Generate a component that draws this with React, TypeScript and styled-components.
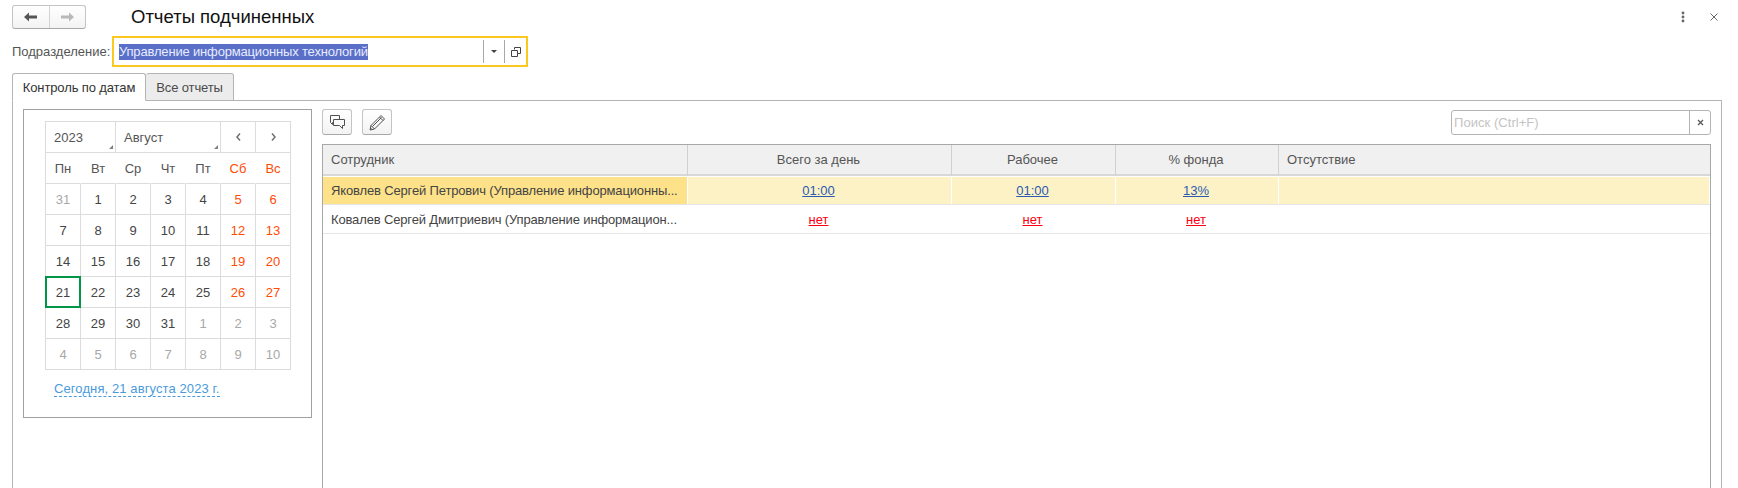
import styled, { createGlobalStyle } from "styled-components";

const GlobalStyle = createGlobalStyle`
    html, body {
        margin: 0;
        padding: 0;
        background: #ffffff;
        overflow: hidden;
    }
    body {
        font-family: "Liberation Sans", Arial, sans-serif;
        font-size: 13px;
        color: #4b4b4b;
    }
`;

const Page = styled.div`
    display: flex;
    flex-direction: column;
    width: 1738px;
    height: 488px;
    overflow: hidden;
`;

const TitleBar = styled.div`
    display: flex;
    align-items: center;
    height: 29px;
    padding: 5px 20px 0 12px;
    box-sizing: border-box;
`;

const NavGroup = styled.div`
    display: flex;
    width: 74px;
    height: 24px;
    box-sizing: border-box;
    border: 1px solid #c4c4c4;
    border-bottom-color: #a8a8a8;
    border-radius: 3px;
    background: linear-gradient(#ffffff, #f3f3f3);
`;

const NavButton = styled.div<{ $divided?: boolean }>`
    display: flex;
    align-items: center;
    justify-content: center;
    flex: 1;
    border-left: ${(p) => (p.$divided ? "1px solid #d4d4d4" : "none")};
`;

const Title = styled.div`
    margin-left: 45px;
    font-size: 18.5px;
    color: #111111;
`;

const TitleActions = styled.div`
    display: flex;
    align-items: center;
    gap: 25px;
    margin-left: auto;
`;

const FieldRow = styled.div`
    display: flex;
    align-items: center;
    height: 31px;
    margin-top: 7px;
    padding-left: 12px;
`;

const FieldLabel = styled.div`
    width: 100px;
    font-size: 13px;
    color: #555555;
`;

const FieldBox = styled.div`
    display: flex;
    align-items: center;
    width: 416px;
    height: 31px;
    box-sizing: border-box;
    border: 2px solid #fac81e;
    padding-left: 5px;
`;

const Selected = styled.span`
    background: #5a6fc8;
    color: #e8ecff;
    font-size: 13px;
    line-height: 16px;
    letter-spacing: -0.17px;
`;

const FieldButton = styled.div<{ $first?: boolean }>`
    display: flex;
    align-items: center;
    justify-content: center;
    width: ${(p) => (p.$first ? "20px" : "21px")};
    height: 23px;
    border-left: 1px solid #a8a8a8;
    margin-left: ${(p) => (p.$first ? "auto" : "0")};
`;

const TabStrip = styled.div`
    display: flex;
    height: 28px;
    margin-top: 6px;
    padding-left: 12px;
`;

const Tab = styled.div<{ $active?: boolean }>`
    display: flex;
    align-items: center;
    justify-content: center;
    width: ${(p) => (p.$active ? "134px" : "88px")};
    box-sizing: border-box;
    border: 1px solid #b4b4b4;
    border-left: ${(p) => (p.$active ? "1px solid #b4b4b4" : "none")};
    border-bottom: ${(p) => (p.$active ? "1px solid #ffffff" : "1px solid #b4b4b4")};
    border-radius: 3px 3px 0 0;
    background: ${(p) => (p.$active ? "#ffffff" : "#ececec")};
    color: ${(p) => (p.$active ? "#333333" : "#4b4b4b")};
    font-size: 13px;
    letter-spacing: -0.12px;
    position: relative;
    z-index: 1;
`;

const TabPanel = styled.div`
    display: flex;
    flex: 1;
    gap: 10px;
    width: 1710px;
    margin: -1px 0 0 12px;
    box-sizing: border-box;
    border: 1px solid #b4b4b4;
    border-bottom: none;
    padding: 8px 10px 0 10px;
`;

const CalendarBox = styled.div`
    width: 289px;
    height: 309px;
    flex-shrink: 0;
    box-sizing: border-box;
    border: 1px solid #a0a0a0;
    padding: 11px 21px 0 21px;
`;

const CalendarGrid = styled.div`
    display: grid;
    grid-template-columns: repeat(7, 35px);
    grid-auto-rows: 31px;
    width: 246px;
    box-sizing: border-box;
    border-top: 1px solid #dcdcdc;
    border-left: 1px solid #dcdcdc;
`;

const CalendarCell = styled.div<{ $span?: number }>`
    position: relative;
    display: flex;
    align-items: center;
    justify-content: center;
    grid-column: span ${(p) => p.$span ?? 1};
    border-right: 1px solid #dcdcdc;
    border-bottom: 1px solid #dcdcdc;
`;

const SelectCell = styled(CalendarCell)`
    justify-content: flex-start;
    padding-left: 8px;
    font-size: 13px;
    color: #555555;
`;

const Corner = styled.span`
    position: absolute;
    right: 2px;
    bottom: 3px;
    width: 0;
    height: 0;
    border-left: 4px solid transparent;
    border-bottom: 4px solid #808080;
`;

const WeekDay = styled(CalendarCell)<{ $weekend?: boolean; $last?: boolean }>`
    border-right-color: ${(p) => (p.$last ? "#dcdcdc" : "transparent")};
    font-size: 13px;
    color: ${(p) => (p.$weekend ? "#ff4c05" : "#555555")};
`;

const Day = styled(CalendarCell)<{ $kind: string }>`
    font-size: 13px;
    color: ${(p) =>
        p.$kind === "weekend" ? "#ff4c05" : p.$kind === "muted" ? "#a8a8a8" : "#444444"};
`;

const TodayFrame = styled.span`
    position: absolute;
    inset: -1px -1px -1px -1px;
    border: 2px solid #009646;
`;

const TodayLink = styled.div`
    display: inline-block;
    margin: 11px 0 0 9px;
    border-bottom: 1px dashed #4a9bdc;
    font-size: 13px;
    line-height: 15px;
    letter-spacing: 0.1px;
    color: #4a9bdc;
`;

const ListArea = styled.div`
    display: flex;
    flex-direction: column;
    flex: 1;
    min-width: 0;
`;

const ListToolbar = styled.div`
    display: flex;
    align-items: flex-start;
    gap: 10px;
    height: 26px;
    margin-bottom: 9px;
`;

const ToolButton = styled.div`
    display: flex;
    align-items: center;
    justify-content: center;
    width: 30px;
    height: 26px;
    box-sizing: border-box;
    border: 1px solid #c4c4c4;
    border-bottom-color: #a8a8a8;
    border-radius: 3px;
    background: linear-gradient(#ffffff, #f3f3f3);
`;

const SearchBox = styled.div`
    display: flex;
    width: 260px;
    height: 25px;
    margin: 1px 0 0 auto;
    box-sizing: border-box;
    border: 1px solid #b4b4b4;
    border-radius: 3px;
`;

const SearchHint = styled.div`
    flex: 1;
    display: flex;
    align-items: center;
    padding-left: 2px;
    font-size: 13px;
    letter-spacing: 0.05px;
    color: #c4c4c4;
`;

const SearchClear = styled.div`
    display: flex;
    align-items: center;
    justify-content: center;
    width: 20px;
    border-left: 1px solid #b4b4b4;
`;

const Table = styled.div`
    flex: 1;
    box-sizing: border-box;
    border: 1px solid #a8a8a8;
    border-bottom: none;
`;

const Row = styled.div`
    display: grid;
    grid-template-columns: 365px 264px 164px 163px 1fr;
`;

const HeaderCell = styled.div<{ $center?: boolean }>`
    display: flex;
    align-items: center;
    justify-content: ${(p) => (p.$center ? "center" : "flex-start")};
    height: 31px;
    box-sizing: border-box;
    padding: ${(p) => (p.$center ? "0 2px 0 0" : "0 0 0 8px")};
    background: #f0f0f0;
    border-right: 1px solid #d0d0d0;
    border-bottom: 2px solid #d8d8d8;
    font-size: 13px;
    color: #555555;
    &:last-child {
        border-right: none;
    }
`;

const DataCell = styled.div<{ $tone?: string; $center?: boolean }>`
    display: flex;
    align-items: center;
    justify-content: ${(p) => (p.$center ? "center" : "flex-start")};
    height: 27px;
    margin-top: 1px;
    padding: ${(p) => (p.$center ? "0 2px 0 0" : "0 0 0 8px")};
    min-width: 0;
    box-sizing: border-box;
    background: ${(p) =>
        p.$tone === "current" ? "#fde28a" : p.$tone === "selected" ? "#fdf2c6" : "#ffffff"};
    border-right: 1px solid #ffffff;
    box-shadow: 0 1px 0 #e6e6e6;
    font-size: 13px;
    color: #444444;
`;

const NameText = styled.span`
    white-space: nowrap;
    letter-spacing: -0.15px;
`;

const ValueLink = styled.span<{ $missing?: boolean }>`
    text-decoration: underline;
    color: ${(p) => (p.$missing ? "#fb0012" : "#2a5bb0")};
`;

const SecondRow = styled(Row)`
    & > div {
        height: 28px;
    }
`;

const weekDays = ["Пн", "Вт", "Ср", "Чт", "Пт", "Сб", "Вс"];

const calendarDays = [
    31, 1, 2, 3, 4, 5, 6, 7, 8, 9, 10, 11, 12, 13, 14, 15, 16, 17, 18, 19, 20, 21, 22, 23, 24, 25,
    26, 27, 28, 29, 30, 31, 1, 2, 3, 4, 5, 6, 7, 8, 9, 10,
];

function dayKind(index: number) {
    if (index === 0 || index >= 32) return "muted";
    if (index % 7 >= 5) return "weekend";
    return "normal";
}

function App() {
    return (
        <>
            <GlobalStyle />
            <Page>
                <TitleBar>
                    <NavGroup>
                        <NavButton>
                            <svg width="14" height="10" viewBox="0 0 14 10">
                                <path d="M0 5 L5 0.5 V3.5 H13 V6.5 H5 V9.5 Z" fill="#555555" />
                            </svg>
                        </NavButton>
                        <NavButton $divided>
                            <svg width="14" height="10" viewBox="0 0 14 10">
                                <path d="M14 5 L9 0.5 V3.5 H1 V6.5 H9 V9.5 Z" fill="#b8b8b8" />
                            </svg>
                        </NavButton>
                    </NavGroup>
                    <Title>Отчеты подчиненных</Title>
                    <TitleActions>
                        <svg width="4" height="12" viewBox="0 0 4 12">
                            <circle cx="2" cy="2" r="1.4" fill="#666666" />
                            <circle cx="2" cy="6" r="1.4" fill="#666666" />
                            <circle cx="2" cy="10" r="1.4" fill="#666666" />
                        </svg>
                        <svg width="8" height="8" viewBox="0 0 8 8">
                            <path d="M0.5 0.5 L7.5 7.5 M7.5 0.5 L0.5 7.5" stroke="#666666" />
                        </svg>
                    </TitleActions>
                </TitleBar>

                <FieldRow>
                    <FieldLabel>Подразделение:</FieldLabel>
                    <FieldBox>
                        <Selected>Управление информационных технологий</Selected>
                        <FieldButton $first>
                            <svg width="6" height="3" viewBox="0 0 6 3">
                                <path d="M0 0 H6 L3 3 Z" fill="#444444" />
                            </svg>
                        </FieldButton>
                        <FieldButton>
                            <svg width="10" height="10" viewBox="0 0 10 10" fill="none">
                                <path
                                    d="M3.5 2.5 V0.5 H9.5 V6.5 H6.5 M0.5 3.5 H6.5 V9.5 H0.5 Z"
                                    stroke="#444444"
                                />
                            </svg>
                        </FieldButton>
                    </FieldBox>
                </FieldRow>

                <TabStrip>
                    <Tab $active>Контроль по датам</Tab>
                    <Tab>Все отчеты</Tab>
                </TabStrip>

                <TabPanel>
                    <CalendarBox>
                        <CalendarGrid>
                            <SelectCell $span={2}>
                                2023
                                <Corner />
                            </SelectCell>
                            <SelectCell $span={3}>
                                Август
                                <Corner />
                            </SelectCell>
                            <CalendarCell>
                                <svg width="5" height="8" viewBox="0 0 5 8">
                                    <path d="M4 0.5 L1 4 L4 7.5" fill="none" stroke="#707070" strokeWidth="1.5" />
                                </svg>
                            </CalendarCell>
                            <CalendarCell>
                                <svg width="5" height="8" viewBox="0 0 5 8">
                                    <path d="M1 0.5 L4 4 L1 7.5" fill="none" stroke="#707070" strokeWidth="1.5" />
                                </svg>
                            </CalendarCell>
                            {weekDays.map((name, index) => (
                                <WeekDay key={name} $weekend={index >= 5} $last={index === 6}>
                                    {name}
                                </WeekDay>
                            ))}
                            {calendarDays.map((day, index) => (
                                <Day key={index} $kind={dayKind(index)}>
                                    {day}
                                    {index === 21 && <TodayFrame />}
                                </Day>
                            ))}
                        </CalendarGrid>
                        <TodayLink>Сегодня, 21 августа 2023 г.</TodayLink>
                    </CalendarBox>

                    <ListArea>
                        <ListToolbar>
                            <ToolButton>
                                <svg width="15" height="14" viewBox="0 0 15 14" fill="none">
                                    <path
                                        d="M3.5 7.5 H2.5 V9.5 L0.5 7.5 V0.5 H9.5 V4.5 M3.5 4.5 H14.5 V10.5 H12.5 V13.5 L9.5 10.5 H3.5 Z"
                                        stroke="#505050"
                                    />
                                </svg>
                            </ToolButton>
                            <ToolButton>
                                <svg width="17" height="17" viewBox="0 0 17 17" fill="none">
                                    <path
                                        d="M1 16 L2 11.5 L12 1.5 L15.5 5 L5.5 15 Z M10.5 3 L14 6.5 M2 11.5 L5.5 15 M3.5 12.5 L12.5 3.5 M1.5 14 L3 15.5"
                                        stroke="#505050"
                                    />
                                </svg>
                            </ToolButton>
                            <SearchBox>
                                <SearchHint>Поиск (Ctrl+F)</SearchHint>
                                <SearchClear>
                                    <svg width="7" height="7" viewBox="0 0 7 7">
                                        <path d="M1 1 L6 6 M6 1 L1 6" stroke="#555555" strokeWidth="1.2" />
                                    </svg>
                                </SearchClear>
                            </SearchBox>
                        </ListToolbar>

                        <Table>
                            <Row>
                                <HeaderCell>Сотрудник</HeaderCell>
                                <HeaderCell $center>Всего за день</HeaderCell>
                                <HeaderCell $center>Рабочее</HeaderCell>
                                <HeaderCell $center>% фонда</HeaderCell>
                                <HeaderCell>Отсутствие</HeaderCell>
                            </Row>
                            <Row>
                                <DataCell $tone="current">
                                    <NameText>Яковлев Сергей Петрович (Управление информационны...</NameText>
                                </DataCell>
                                <DataCell $tone="selected" $center>
                                    <ValueLink>01:00</ValueLink>
                                </DataCell>
                                <DataCell $tone="selected" $center>
                                    <ValueLink>01:00</ValueLink>
                                </DataCell>
                                <DataCell $tone="selected" $center>
                                    <ValueLink>13%</ValueLink>
                                </DataCell>
                                <DataCell $tone="selected" />
                            </Row>
                            <SecondRow>
                                <DataCell>
                                    <NameText>Ковалев Сергей Дмитриевич (Управление информацион...</NameText>
                                </DataCell>
                                <DataCell $center>
                                    <ValueLink $missing>нет</ValueLink>
                                </DataCell>
                                <DataCell $center>
                                    <ValueLink $missing>нет</ValueLink>
                                </DataCell>
                                <DataCell $center>
                                    <ValueLink $missing>нет</ValueLink>
                                </DataCell>
                                <DataCell />
                            </SecondRow>
                        </Table>
                    </ListArea>
                </TabPanel>
            </Page>
        </>
    );
}

export default App;
